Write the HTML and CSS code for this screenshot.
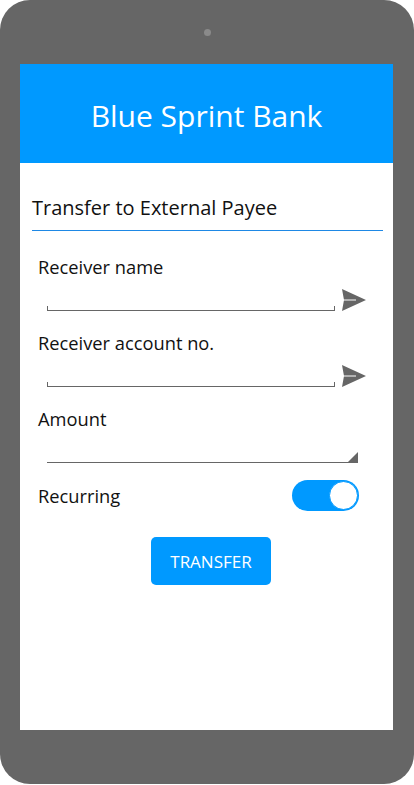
FILE: index.html
```html
<!DOCTYPE html>
<html>
<head>
<meta charset="utf-8">
<link rel="stylesheet" href="styles.css">
</head>
<body>
<div class="device">
  <div class="camera"></div>
  <div class="screen">
    <header class="appbar"><h1>Blue Sprint Bank</h1></header>
    <main class="content">
      <h2 class="page-title">Transfer to External Payee</h2>
      <div class="field">
        <label>Receiver name</label>
        <div class="input-row">
          <div class="input bracket"></div>
          <svg class="send" width="24" height="22" viewBox="0 0 24 22"><polygon points="0,0 24,11 0,22 2,11" fill="#666"/><line x1="1" y1="11" x2="14" y2="11" stroke="#fff" stroke-width="1"/></svg>
        </div>
      </div>
      <div class="field">
        <label>Receiver account no.</label>
        <div class="input-row">
          <div class="input bracket"></div>
          <svg class="send" width="24" height="22" viewBox="0 0 24 22"><polygon points="0,0 24,11 0,22 2,11" fill="#666"/><line x1="1" y1="11" x2="14" y2="11" stroke="#fff" stroke-width="1"/></svg>
        </div>
      </div>
      <div class="field last">
        <label>Amount</label>
        <div class="input-row">
          <div class="input amount"><span class="grip"></span></div>
        </div>
      </div>
      <div class="toggle-row">
        <span class="toggle-label">Recurring</span>
        <div class="toggle"><span class="knob"></span></div>
      </div>
      <div class="actions">
        <button class="btn">TRANSFER</button>
      </div>
    </main>
  </div>
</div>
</body>
</html>
```
FILE: styles.css
```css
html, body {
  margin: 0;
  padding: 0;
  background: #fff;
}
body {
  width: 414px;
  height: 785px;
  font-family: "Open Sans", "Noto Sans", sans-serif;
}
.device {
  box-sizing: border-box;
  width: 414px;
  height: 784px;
  background: #666;
  border-radius: 30px;
  padding: 64px 21px 54px 20px;
  position: relative;
  display: flex;
}
.camera {
  position: absolute;
  left: 204px;
  top: 29px;
  width: 7px;
  height: 7px;
  border-radius: 50%;
  background: #8a8a8a;
}
.screen {
  flex: 1;
  background: #fff;
  display: flex;
  flex-direction: column;
}
.appbar {
  height: 99px;
  background: #0099ff;
  display: flex;
  align-items: center;
  justify-content: center;
}
.appbar h1 {
  margin: 0;
  color: #fff;
  font-weight: 400;
  font-size: 30px;
  line-height: 40px;
  padding-top: 4px;
}
.content {
  padding: 30px 10px 0 12px;
}
.page-title {
  margin: 0 0 23px 0;
  font-weight: 400;
  font-size: 20px;
  color: #111;
  line-height: 30px;
  padding-bottom: 7px;
  border-bottom: 1px solid #1e88e5;
}
.field {
  padding-left: 6px;
  margin-bottom: 19px;
}
.field.last {
  margin-bottom: 17px;
}
.field label {
  display: block;
  font-size: 18.3px;
  color: #111;
  line-height: 26px;
}
.input-row {
  display: flex;
  align-items: flex-end;
  padding-left: 9px;
  height: 31px;
}
.input {
  height: 5px;
  border-bottom: 1px solid #666;
  width: 288px;
  box-sizing: border-box;
}
.bracket {
  border-left: 1px solid #666;
  border-right: 1px solid #666;
}
.send {
  margin-left: 7px;
  margin-bottom: 0;
}
.amount {
  width: 311px;
  position: relative;
}
.grip {
  position: absolute;
  right: 0;
  bottom: 0;
  width: 0;
  height: 0;
  border-left: 10px solid transparent;
  border-bottom: 10px solid #666;
}
.toggle-row {
  display: flex;
  align-items: center;
  justify-content: space-between;
  padding-left: 6px;
  padding-right: 24px;
  height: 31px;
}
.toggle-label {
  font-size: 18.3px;
  color: #111;
}
.toggle {
  width: 67px;
  height: 31px;
  border-radius: 16px;
  background: #0099ff;
  position: relative;
}
.knob {
  position: absolute;
  right: 1px;
  top: 1px;
  width: 27px;
  height: 27px;
  border-radius: 50%;
  background: #fff;
  border: 1px solid #0099ff;
  box-sizing: content-box;
}
.actions {
  display: flex;
  justify-content: center;
  margin-top: 26px;
}
.btn {
  width: 120px;
  height: 48px;
  border: none;
  border-radius: 5px;
  background: #0099ff;
  color: #fff;
  font-family: "Open Sans", "Noto Sans", sans-serif;
  font-size: 17px;
  margin-left: 7px;
  padding: 0;
}
```
